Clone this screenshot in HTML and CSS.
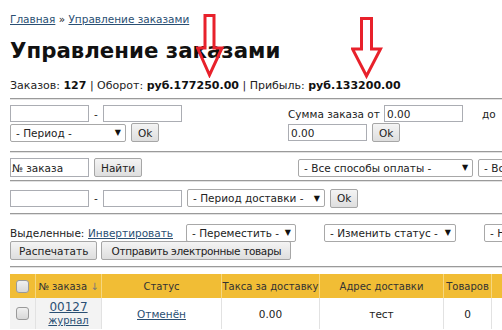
FILE: index.html
```html
<!DOCTYPE html>
<html lang="ru">
<head>
<meta charset="utf-8">
<link rel="stylesheet" href="styles.css">
</head>
<body>
<div class="page">
  <div class="crumbs"><a href="#">Главная</a> » <a href="#">Управление заказами</a></div>
  <h1>Управление заказами</h1>
  <div class="stats">Заказов: <b>127</b> | Оборот: <b>руб.177250.00</b> | Прибыль: <b>руб.133200.00</b></div>
  <div class="rule r1"></div>

  <div class="filter">
    <div class="fleft">
      <div class="line"><span class="inp"></span><span class="dash">-</span><span class="inp"></span></div>
      <div class="line"><span class="sel w115">- Период -</span><span class="btn">Ok</span></div>
    </div>
    <div class="fright">
      <div class="line"><span class="lbl">Сумма заказа от</span><span class="inp">0.00</span><span class="do">до</span></div>
      <div class="line"><span class="inp">0.00</span><span class="btn">Ok</span></div>
    </div>
  </div>
  <div class="rule r2"></div>

  <div class="filter row3">
    <div class="line"><span class="inp ph">№ заказа</span><span class="btn">Найти</span></div>
    <div class="line pay"><span class="sel w174">- Все способы оплаты -</span><span class="sel w100">- Все</span></div>
  </div>
  <div class="rule r3"></div>

  <div class="filter row4">
    <div class="line"><span class="inp"></span><span class="dash">-</span><span class="inp"></span><span class="sel w137">- Период доставки -</span><span class="btn">Ok</span></div>
  </div>
  <div class="rule r4"></div>

  <div class="actions">
    <div class="line a1"><span class="lbl">Выделенные:</span><a href="#" class="inv">Инвертировать</a><span class="sel w109">- Переместить -</span><span class="sel w131">- Изменить статус -</span><span class="sel w100">- Н</span></div>
    <div class="line a2"><span class="btn">Распечатать</span><span class="btn tight">Отправить электронные товары</span></div>
  </div>
  <div class="rule r5"></div>

  <table class="orders">
    <thead>
      <tr>
        <th class="c0"><span class="cb"></span></th>
        <th class="c1">№ заказа <span class="sort">↓</span></th>
        <th class="c2">Статус</th>
        <th class="c3">Такса за доставку</th>
        <th class="c4">Адрес доставки</th>
        <th class="c5">Товаров</th>
        <th class="c6">Кол.</th>
      </tr>
    </thead>
    <tbody>
      <tr>
        <td class="c0 gray"><span class="cb"></span></td>
        <td class="c1 gray"><a href="#" class="num">00127</a><br><a href="#" class="jr">журнал</a></td>
        <td><a href="#">Отменён</a></td>
        <td>0.00</td>
        <td>тест</td>
        <td>0</td>
        <td>2</td>
      </tr>
    </tbody>
  </table>

  <svg class="arrow a-1" width="28" height="64" viewBox="0 0 28 64"><path d="M9 1.5 H18 V34 H26 L13.5 61 L1.5 34 H9 Z" fill="none" stroke="#e8212b" stroke-width="3" stroke-linejoin="miter"/></svg>
  <svg class="arrow a-2" width="32" height="62" viewBox="0 0 32 62"><path d="M10.5 1.5 H20.5 V32 H29.5 L15.5 59 L1.5 32 H10.5 Z" fill="none" stroke="#e8212b" stroke-width="3" stroke-linejoin="miter"/></svg>
</div>
</body>
</html>
```
FILE: styles.css
```css
html, body { margin: 0; padding: 0; overflow: hidden; background: #fff; }
body { font-family: "DejaVu Sans", Verdana, sans-serif; font-size: 10.5px; color: #222; }
.page { position: relative; padding: 12px 0 0 10px; width: 640px; }
a { color: #2a4f73; text-decoration: underline; }
.crumbs { height: 14px; line-height: 14px; }
h1 { margin: 11px 0 0; font-size: 21.3px; line-height: 28px; font-weight: bold; color: #111; }
.stats { margin-top: 14px; line-height: 14px; font-size: 11px; }
.stats b { font-weight: bold; color: #111; }
.rule { height: 0; border-top: 1px solid #9a9a9a; border-bottom: 1px solid #e2e2e2; }
.r1 { margin: 5px 0 4px; }
.r2 { margin: 9px 0 5px; }
.r3 { margin: 3px 0 6px; }
.r4 { margin: 5px 0 9px; }
.r5 { margin: 6px 0 6px; }

.line { display: flex; align-items: center; height: 19px; white-space: nowrap; }
.line > * { flex: none; }
.inp { box-sizing: border-box; display: inline-flex; align-items: center; width: 79px; height: 17px; border: 1px solid #abadb3; background: #fff; padding: 0 2px; color: #222; }
.inp.ph { height: 19px; padding-left: 1px; }
.dash { width: 14px; text-align: center; }
.sel { box-sizing: border-box; display: inline-flex; align-items: center; justify-content: space-between; height: 18px; border: 1px solid #a8a8a8; border-radius: 2px; background: #fff; padding: 0 4px 0 5px; color: #222; overflow: hidden; }
.sel::after { content: "▼"; font-size: 8px; color: #111; }
.w115 { width: 116px; }
.w174 { width: 175px; }
.w137 { width: 138px; }
.w109 { width: 110px; }
.w131 { width: 132px; }
.w100 { width: 100px; }
.btn { box-sizing: border-box; display: inline-flex; align-items: center; justify-content: center; height: 19px; padding: 0 6px; border: 1px solid #a6a6a6; border-radius: 2px; background: linear-gradient(#f4f4f4, #dedede); color: #222; margin-left: 5px; }

.filter { display: flex; }
.fleft { width: 278px; }
.fright .lbl { width: 96px; }
.fright .do { margin-left: 19px; }

.row3 .pay { margin-left: 156px; }
.row3 .pay .sel + .sel { margin-left: 5px; }
.row4 .line { height: 20px; }
.row4 .sel { margin-left: 5px; }

.a1 { height: 17px; }
.a1 .lbl { width: 78px; }
.a1 .inv { width: 98px; }
.a1 .sel + .sel { margin-left: 28px; }
.a2 { height: 19px; margin-top: 0; }
.a2 .btn { margin-left: 4px; padding: 0 8px; }
.a2 .btn:first-child { margin-left: 0; }
.a2 .btn.tight { width: 190px; padding: 0; letter-spacing: -0.35px; }

.orders { border-collapse: collapse; table-layout: fixed; width: 560px; }
.orders th { background: #f1bd35; color: #333; font-weight: normal; font-size: 10px; height: 24px; padding: 0; border-left: 1px solid #f6d77f; text-align: center; white-space: nowrap; overflow: hidden; }
.orders th:first-child { border-left: 0; }
.orders td { height: 31px; padding: 0; text-align: center; border-left: 1px solid #e2e2e2; vertical-align: middle; white-space: nowrap; }
.orders td:first-child { border-left: 0; }
.orders td.gray { background: #f3f3f3; }
.c0 { width: 25px; }
.c1 { width: 65px; }
.c2 { width: 119px; }
.c3 { width: 97px; }
.c4 { width: 123px; }
.c5 { width: 47px; }
.cb { display: inline-block; box-sizing: border-box; width: 13px; height: 13px; border: 1px solid #9a9a9a; border-radius: 3px; background: linear-gradient(#f0f0f0, #d8d8d8); vertical-align: middle; }
.sort { color: #777; }
.num { font-size: 12px; line-height: 14px; }
.jr { font-size: 10px; line-height: 12px; }

.arrow { position: absolute; }
.a-1 { left: 196px; top: 14px; }
.a-2 { left: 351px; top: 17px; }
```
